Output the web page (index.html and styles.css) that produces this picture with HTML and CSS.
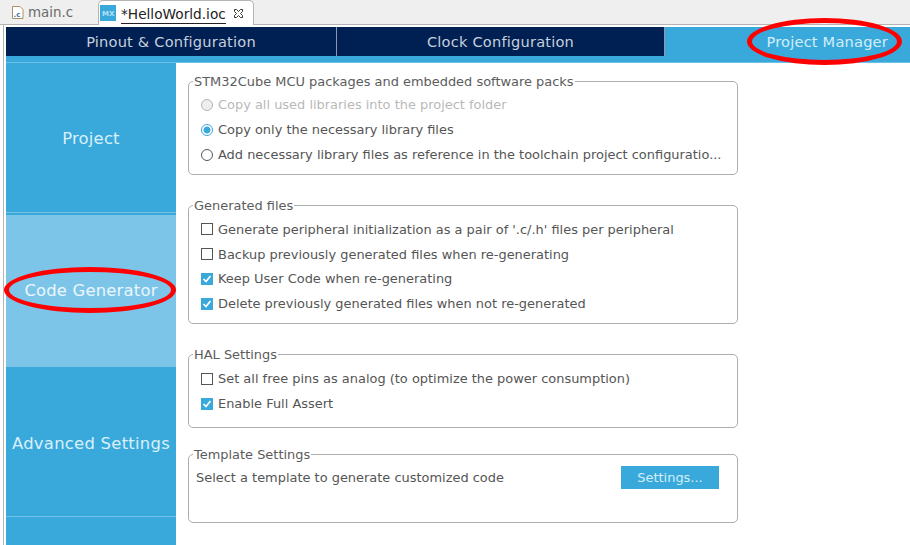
FILE: index.html
```html
<!DOCTYPE html>
<html lang="en">
<head>
<meta charset="utf-8">
<title>HelloWorld.ioc</title>
<link rel="stylesheet" href="styles.css">
</head>
<body>
<div class="window">
  <div class="tabbar">
    <div class="tab">
      <svg class="file-icon" width="14" height="15" viewBox="0 0 14 15"><path d="M1.5 1.5h7.5l3 3v9h-10.500z" fill="#fff" stroke="#a9926a"/><text x="2.500" y="11.500" class="file-letter">.c</text></svg>
      <span>main.c</span>
    </div>
    <div class="tab tab-active">
      <svg class="mx-icon" width="16" height="16" viewBox="0 0 16 16"><rect width="16" height="16" fill="#39a9dc"/><text x="2" y="10.500" class="mx-letter">MX</text></svg>
      <span class="tab-title">*HelloWorld.ioc</span>
      <svg class="close-icon" width="11" height="11" viewBox="0 0 11 11"><path d="M1.500 1.500h2l2 2 2-2h2v2l-2 2 2 2v2h-2l-2-2-2 2h-2v-2l2-2-2-2z" fill="#fff" stroke="#333"/></svg>
    </div>
  </div>
  <div class="editor">
    <nav class="topnav">
      <div class="topitem topitem-dark">Pinout &amp; Configuration</div>
      <div class="topitem topitem-dark">Clock Configuration</div>
      <div class="topitem topitem-active">Project Manager</div>
    </nav>
    <div class="band"></div>
    <div class="main">
      <aside class="sidebar">
        <div class="sideitem sideitem-project">Project</div>
        <div class="sideitem sideitem-active">Code Generator</div>
        <div class="sideitem sideitem-advanced">Advanced Settings</div>
        <div class="sideitem sideitem-last"></div>
      </aside>
      <div class="content">
        <fieldset class="group group-mcu">
          <legend>STM32Cube MCU packages and embedded software packs</legend>
          <div class="row row-disabled"><span class="radio radio-disabled"></span>Copy all used libraries into the project folder</div>
          <div class="row"><span class="radio radio-on"></span>Copy only the necessary library files</div>
          <div class="row"><span class="radio"></span>Add necessary library files as reference in the toolchain project configuratio...</div>
        </fieldset>
        <fieldset class="group group-files">
          <legend>Generated files</legend>
          <div class="row"><span class="check"></span>Generate peripheral initialization as a pair of '.c/.h' files per peripheral</div>
          <div class="row"><span class="check"></span>Backup previously generated files when re-generating</div>
          <div class="row"><span class="check check-on"><svg width="12" height="12" viewBox="0 0 12 12"><path d="M2.500 6l2.500 2.500 4.500-5.500" fill="none" stroke="#fff" stroke-width="1.700"/></svg></span>Keep User Code when re-generating</div>
          <div class="row"><span class="check check-on"><svg width="12" height="12" viewBox="0 0 12 12"><path d="M2.500 6l2.500 2.500 4.500-5.500" fill="none" stroke="#fff" stroke-width="1.700"/></svg></span>Delete previously generated files when not re-generated</div>
        </fieldset>
        <fieldset class="group group-hal">
          <legend>HAL Settings</legend>
          <div class="row"><span class="check"></span>Set all free pins as analog (to optimize the power consumption)</div>
          <div class="row"><span class="check check-on"><svg width="12" height="12" viewBox="0 0 12 12"><path d="M2.500 6l2.500 2.500 4.500-5.500" fill="none" stroke="#fff" stroke-width="1.700"/></svg></span>Enable Full Assert</div>
        </fieldset>
        <fieldset class="group group-template">
          <legend>Template Settings</legend>
          <div class="template-row">
            <span>Select a template to generate customized code</span>
            <button class="settings-btn" type="button">Settings...</button>
          </div>
        </fieldset>
      </div>
    </div>
  </div>
  <div class="ring ring-top"></div>
  <div class="ring ring-side"></div>
</div>
</body>
</html>
```

FILE: styles.css
```css
* { box-sizing: border-box; }
html, body { margin: 0; padding: 0; }
body { background: #fff; font-family: "DejaVu Sans", sans-serif; font-size: 12.95px; color: #555; }
.window { position: relative; width: 910px; height: 545px; overflow: hidden; }

.tabbar { display: flex; align-items: flex-end; height: 25px; background: #efefef; border-bottom: 1px solid #b4b4b4; padding-left: 4px; }
.tab { display: flex; align-items: center; gap: 3px; width: 94px; height: 24px; padding-left: 7px; color: #6a6a6a; font-size: 13.4px; }
.file-icon { flex: none; }
.file-letter { font: bold 7px "DejaVu Sans", sans-serif; fill: #3b74a8; }
.tab-active { width: 156px; height: 25px; margin-bottom: -1px; background: #fff; border: 1px solid #b4b4b4; border-bottom: 0; border-radius: 5px 5px 0 0; padding-left: 1px; gap: 5px; color: #222; }
.mx-letter { font: bold 7px "DejaVu Sans", sans-serif; fill: #b6e0f3; }
.tab-title { border-bottom: 1px solid #222; line-height: 17px; margin-top: 4px; font-size: 13.7px; }
.close-icon { flex: none; margin-left: 2px; }

.editor { height: 520px; margin-left: 4px; border-left: 2px solid #fff; box-shadow: -1px 0 0 #b4b4b4; display: flex; flex-direction: column; }
.topnav { display: flex; height: 31px; padding-top: 2px; background: #fff; flex: none; }
.topitem { display: flex; align-items: center; justify-content: center; font-size: 14.6px; letter-spacing: 0.2px; color: #c6d0dc; }
.topitem-dark { background: #001f52; border-right: 1px solid #8a9ab5; width: 331px; }
.topitem-dark + .topitem-dark { width: 328px; }
.topitem-active { flex: 1; background: #39a9dc; color: #d4eef9; justify-content: flex-end; padding-right: 22px; }
.band { flex: none; height: 7px; background: #39a9dc; border-bottom: 1px solid #6fc0e6; }

.main { flex: 1; display: flex; min-height: 0; }
.sidebar { flex: none; width: 170px; background: #39a9dc; display: flex; flex-direction: column; }
.sideitem { display: flex; align-items: center; justify-content: center; height: 150px; color: #d9f0fa; font-size: 16.4px; letter-spacing: 0.2px; flex: none; border-bottom: 1px solid #74c2e7; }
.sideitem-project { padding-top: 2px; }
.sideitem-active { background: #7cc5e9; border: 0; border-top: 2px solid #39a9dc; height: 154px; padding-bottom: 2px; color: #ebf7fc; }
.sideitem-advanced { padding-top: 3px; letter-spacing: 0.27px; }
.sideitem-last { border: 0; height: auto; flex: 1; }

.content { flex: none; width: 562px; padding-left: 12px; display: flex; flex-direction: column; }
.group { margin: 0; padding: 0 7px; border: 1px solid #a9aeb3; border-radius: 5px; min-width: 0; width: 550px; }
.group legend { padding: 0 1px; margin-left: -3px; line-height: 15px; color: #5c5c5c; }
.group-mcu { margin-top: 11px; height: 101px; }
.group-files { margin-top: 23px; height: 126px; }
.group-hal { margin-top: 23px; height: 81px; }
.group-template { margin-top: 19px; height: 76px; }
.row { display: flex; align-items: center; height: 25px; white-space: nowrap; margin-left: 5px; color: #555; }
.row-disabled { color: #b9b9b9; }
.group-mcu .row:first-of-type { margin-top: 3px; }
.group-files .row { height: 24.75px; }
.group-files .row:first-of-type, .group-hal .row:first-of-type { margin-top: 4px; }

.radio { flex: none; width: 12px; height: 12px; margin-right: 5px; border: 1px solid #555; border-radius: 50%; background: #fff; }
.radio-disabled { border-color: #b5b5b5; background: #eee; }
.radio-on { border-color: #39a9dc; background: radial-gradient(circle, #39a9dc 0 3.2px, #fff 3.8px); }
.check { flex: none; width: 12px; height: 12px; margin-right: 5px; border: 1px solid #555; background: #fff; display: flex; }
.check svg { display: block; flex: none; margin: -1px; }
.check-on { border-color: #39a9dc; background: #39a9dc; }

.template-row { display: flex; align-items: center; justify-content: space-between; height: 24px; margin-top: 3px; padding-right: 11px; white-space: nowrap; }
.settings-btn { width: 98px; height: 23px; padding: 0; border: 0; background: #39a9dc; color: #d4eef9; font: 12.95px "DejaVu Sans", sans-serif; }

.ring { position: absolute; border: 5px solid #f00; border-radius: 50%; pointer-events: none; }
.ring-top { left: 747px; top: 18px; width: 155px; height: 47px; }
.ring-side { left: 4px; top: 267px; width: 172px; height: 46px; }
```
